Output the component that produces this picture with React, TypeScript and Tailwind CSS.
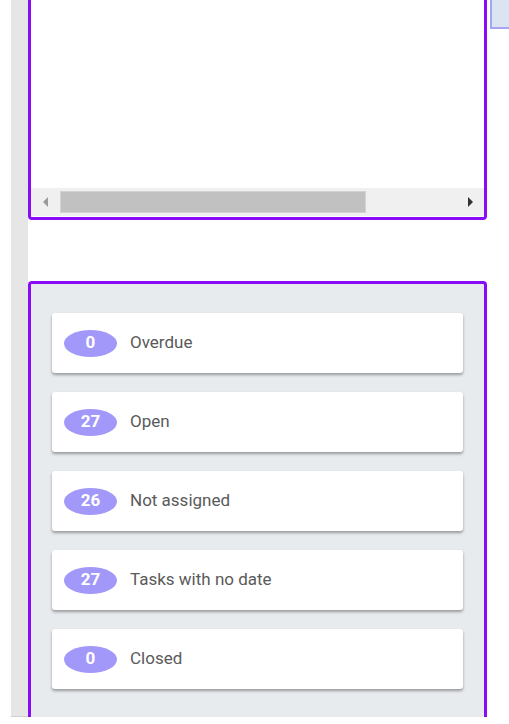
import React from "react";

const items = [
  { n: "0", label: "Overdue" },
  { n: "27", label: "Open" },
  { n: "26", label: "Not assigned" },
  { n: "27", label: "Tasks with no date" },
  { n: "0", label: "Closed" },
];

export default function App() {
  return (
    <div
      className="w-[509px] h-[724px] bg-white overflow-hidden flex"
      style={{ fontFamily: "Roboto, 'Liberation Sans', sans-serif" }}
    >
      <div className="w-[11px] shrink-0" />
      <div className="w-[17px] h-[717px] shrink-0 bg-[#e6e6e6] border-b border-[#cfcfcf]" />
      <div className="w-[459px] shrink-0 flex flex-col">
        {/* top panel */}
        <div className="h-[220px] border-x-[3px] border-b-[3px] border-[#8a0cf7] rounded-b-[4px] flex flex-col bg-white">
          <div className="flex-1" />
          <div className="h-[28px] bg-[#f0f0f0] flex items-center mb-[1px]">
            <div className="w-[29px] h-full flex items-center justify-center">
              <svg width="8" height="12" viewBox="0 0 8 12">
                <path d="M6 1 L1 6 L6 11 Z" fill="#9a9a9a" />
              </svg>
            </div>
            <div className="w-[306px] h-[22px] bg-[#c0c1c0] border border-[#d2d3d2]" />
            <div className="flex-1" />
            <div className="w-[29px] h-full flex items-center justify-center">
              <svg width="8" height="12" viewBox="0 0 8 12">
                <path d="M2 1 L7 6 L2 11 Z" fill="#333" />
              </svg>
            </div>
          </div>
        </div>
        <div className="h-[61px]" />
        {/* bottom panel */}
        <div className="h-[436px] border-x-[3px] border-t-[3px] border-[#8a0cf7] rounded-t-[4px] bg-[#e8ebee] px-[21px] pt-[29px] flex flex-col gap-[19px]">
          {items.map((it, i) => (
            <div
              key={i}
              className="h-[60px] bg-white rounded-[3px] shadow-[0_2px_3px_rgba(0,0,0,0.35)] flex items-center pl-[12px]"
            >
              <div className="w-[53px] h-[27px] rounded-[50%] bg-[#a298fa] flex items-center justify-center text-white font-bold text-[17px]">
                {it.n}
              </div>
              <div className="ml-[13px] text-[17px] text-[#5a5a5a]">{it.label}</div>
            </div>
          ))}
        </div>
      </div>
      <div className="w-[3px] shrink-0" />
      <div className="w-[19px] h-[29px] shrink-0 bg-[#dbe4f1] border-l-2 border-b-2 border-[#a7a4f3]" />
    </div>
  );
}
